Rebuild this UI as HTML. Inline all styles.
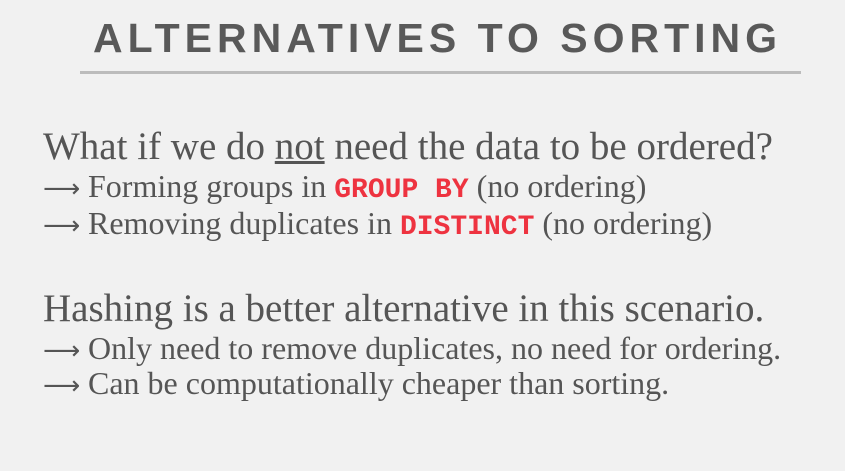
<!DOCTYPE html>
<html><head><meta charset="utf-8"><style>
html,body{margin:0;padding:0;}
body{width:845px;height:471px;background:#f1f1f1;position:relative;overflow:hidden;color:#555;}
.t{position:absolute;left:0;width:845px;top:14px;text-align:center;font:bold 41px/48px "Liberation Sans",sans-serif;letter-spacing:5px;color:#595959;padding-left:30px;box-sizing:border-box}
.rule{position:absolute;left:80px;width:721px;top:71px;height:3px;background:#bcbcbc}
.l{position:absolute;left:43px;font-family:"Liberation Serif","Noto Serif CJK SC",serif;white-space:nowrap;color:#555}
.b{font-size:39px;}
.s{font-size:32px;}
.a{display:inline-block;width:45px;font-family:"DejaVu Sans",sans-serif;font-size:26px}
.c{font-family:"Liberation Mono",monospace;font-weight:bold;color:#ee3340;font-size:28px}
</style></head><body>
<div class="t">ALTERNATIVES TO SORTING</div>
<div class="rule"></div>
<div class="l b" style="top:124px">What if we do <u>not</u> need the data to be ordered?</div>
<div class="l s" style="top:168px"><span class="a">⟶</span>Forming groups in <span class="c">GROUP BY</span> (no ordering)</div>
<div class="l s" style="top:205px"><span class="a">⟶</span>Removing duplicates in <span class="c">DISTINCT</span> (no ordering)</div>
<div class="l b" style="top:286px">Hashing is a better alternative in this scenario.</div>
<div class="l s" style="top:330px"><span class="a">⟶</span>Only need to remove duplicates, no need for ordering.</div>
<div class="l s" style="top:365px"><span class="a">⟶</span>Can be computationally cheaper than sorting.</div>
</body></html>
